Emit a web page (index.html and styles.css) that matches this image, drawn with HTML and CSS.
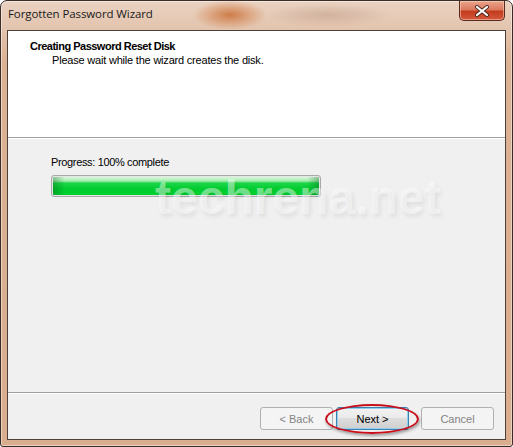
FILE: index.html
```html
<!DOCTYPE html>
<html>
<head>
<meta charset="utf-8">
<link rel="stylesheet" href="styles.css">
</head>
<body>
<div class="window">
  <div class="titlebar">
    <div class="blur-a"></div>
    <div class="blur-b"></div>
    <span class="title">Forgotten Password Wizard</span>
    <div class="close">
      <svg width="18" height="12" viewBox="0 0 18 12"><path d="M4 2 L14 10 M14 2 L4 10" stroke="#4a2a20" stroke-width="4" stroke-linecap="round"/><path d="M4 2 L14 10 M14 2 L4 10" stroke="#ffffff" stroke-width="2.2" stroke-linecap="round"/></svg>
    </div>
  </div>
  <div class="client">
    <div class="header">
      <div class="h-title">Creating Password Reset Disk</div>
      <div class="h-sub">Please wait while the wizard creates the disk.</div>
    </div>
    <div class="content">
      <div class="label">Progress: 100% complete</div>
      <div class="progress"><div class="fill"></div></div>
      <div class="watermark">techrena.net</div>
    </div>
    <div class="footer">
      <button class="btn disabled">&lt; Back</button>
      <button class="btn default">Next &gt;</button>
      <button class="btn disabled cancel">Cancel</button>
      <div class="ring"></div>
    </div>
  </div>
</div>
</body>
</html>
```
FILE: styles.css
```css
* { box-sizing: border-box; }
html, body { margin: 0; padding: 0; background: #ffffff; }
body { width: 513px; height: 447px; overflow: hidden; font-family: "Liberation Sans", Arial, sans-serif; }

.window {
  width: 513px;
  height: 447px;
  border: 1px solid #3b2e28;
  border-radius: 7px 7px 3px 3px;
  background: linear-gradient(180deg, #ead2c1 0px, #e2c3ad 30px, #dcb294 60px, #d9ad8d 447px);
  padding: 0 6px 6px 6px;
  display: flex;
  flex-direction: column;
  box-shadow: inset 0 0 0 1px rgba(255,255,255,0.45);
}

.titlebar {
  height: 29px;
  flex: none;
  display: flex;
  align-items: flex-start;
  position: relative;
}
.blur-a {
  position: absolute; left: 188px; top: 0; width: 70px; height: 28px;
  background: radial-gradient(ellipse at center, rgba(200,105,45,0.8) 0%, rgba(212,135,85,0.45) 45%, rgba(226,190,165,0) 75%);
}
.blur-b {
  position: absolute; left: 258px; top: 2px; width: 125px; height: 24px;
  background: radial-gradient(ellipse at center, rgba(170,130,110,0.35) 0%, rgba(200,170,150,0) 70%);
}
.title {
  position: relative;
  font-family: "Open Sans", "Noto Sans", sans-serif;
  font-size: 11.5px;
  color: #1a1a1a;
  margin-left: 1px;
  margin-top: 5px;
  letter-spacing: -0.1px;
}
.close {
  position: relative;
  margin-left: auto;
  margin-right: 1px;
  width: 46px;
  height: 20px;
  border: 1px solid #5a2a20;
  border-top: none;
  border-radius: 0 0 5px 5px;
  background: linear-gradient(180deg, #eaa48c 0%, #dc7a60 45%, #c43c1e 55%, #d4583c 100%);
  display: flex;
  align-items: center;
  justify-content: center;
  box-shadow: inset 0 0 0 1px rgba(255,220,200,0.5);
}

.client {
  flex: 1;
  border: 1px solid #4c3f38;
  background: #f0f0f0;
  display: flex;
  flex-direction: column;
  font-size: 11px;
  color: #000;
}

.header {
  height: 107px;
  flex: none;
  background: #ffffff;
  border-bottom: 1px solid #a0a0a0;
  padding: 9px 0 0 22px;
}
.h-title { font-weight: bold; font-size: 11px; line-height: 13px; letter-spacing: -0.5px; }
.h-sub { margin-left: 22px; margin-top: 1px; line-height: 13px; letter-spacing: -0.2px; }

.content {
  flex: 1;
  position: relative;
  border-top: 1px solid #ffffff;
  border-bottom: 1px solid #a0a0a0;
  padding: 17px 0 0 43px;
}
.label { line-height: 13px; letter-spacing: -0.35px; }
.progress {
  margin-top: 6px;
  width: 270px;
  height: 22px;
  border: 1px solid #a8a8a8;
  border-radius: 3px;
  background: #e6e6e6;
  padding: 1px;
  position: relative;
  z-index: 1;
}
.fill {
  width: 100%;
  height: 100%;
  border-radius: 1px;
  background:
    linear-gradient(90deg, rgba(0,90,20,0.35) 0px, rgba(0,90,20,0) 12px, rgba(0,90,20,0) calc(100% - 12px), rgba(0,90,20,0.35) 100%),
    linear-gradient(180deg, #d8f8da 0px, #a6eeb0 4px, #1ed64a 6px, #00cc2e 12px, #00d030 100%);
}
.watermark {
  position: absolute;
  left: 147px;
  top: 31px;
  font-family: "Liberation Sans", Arial, sans-serif;
  font-weight: bold;
  font-size: 48px;
  line-height: 56px;
  color: rgba(255,255,255,0.45);
  text-shadow: 2px 3px 4px rgba(0,0,0,0.07);
  z-index: 2;
}

.footer {
  height: 46px;
  flex: none;
  border-top: 1px solid #ffffff;
  position: relative;
  display: flex;
  align-items: flex-start;
  padding: 13px 11px 0 0;
  justify-content: flex-end;
}
.btn {
  width: 73px;
  height: 23px;
  font-family: "Liberation Sans", Arial, sans-serif;
  font-size: 11px;
  border-radius: 3px;
  padding: 0;
  margin: 0 0 0 3px;
}
.btn.disabled {
  border: 1px solid #adb2b5;
  background: #f4f4f4;
  color: #838383;
}
.btn.cancel { margin-left: 12px; }
.btn.default {
  border: 1px solid #3c7fb1;
  background: linear-gradient(180deg, #f2f2f2 0%, #ebebeb 45%, #dddddd 50%, #cfcfcf 100%);
  color: #000;
  box-shadow: inset 0 0 0 1px #92d0f0;
}
.ring {
  position: absolute;
  left: 317px;
  top: 10px;
  width: 94px;
  height: 30px;
  border: 2px solid #c8101c;
  border-radius: 50%;
  box-shadow: 1px 2px 3px rgba(0,0,0,0.35);
  pointer-events: none;
}
```
